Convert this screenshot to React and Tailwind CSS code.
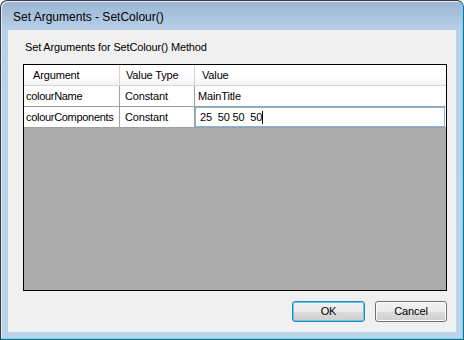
import React from 'react';

const rows = [
    { name: 'colourName', type: 'Constant', value: 'MainTitle' },
    { name: 'colourComponents', type: 'Constant', value: '25  50 50  50', editing: true },
];

const Btn = ({ children, focused }) => (
    <button
        className={
            focused
                ? 'w-[73px] h-[21px] rounded-[3px] border border-[#3c7fb1] shadow-[inset_0_0_0_1px_#48d0f8] bg-[linear-gradient(#f2f2f2_0%,#ebebeb_50%,#dddddd_51%,#cfcfcf_100%)] text-[11px] text-black'
                : 'w-[72px] h-[21px] rounded-[3px] border border-[#707070] shadow-[inset_0_0_0_1px_#fcfcfc] bg-[linear-gradient(#f2f2f2_0%,#ebebeb_50%,#dddddd_51%,#cfcfcf_100%)] text-[11px] text-black'
        }
    >
        {children}
    </button>
);

export default function App() {
    return (
        <div className="w-[464px] h-[340px] bg-white font-['Liberation_Sans',Arial,sans-serif]">
            <div className="w-full h-full flex flex-col rounded-t-[7px] border border-[#3a3a3a] border-r-[#1d6f8c] border-b-[#1d6f8c] bg-[linear-gradient(#9ab5d3_0px,#b9d1ea_30px,#bcd3ec_100%)] px-[7px] pb-[7px] shadow-[inset_-1px_-1px_0_#6fd6f2,inset_1px_1px_0_#e4eefa]">
                {/* Title bar */}
                <div className="h-[29px] flex items-center pl-[5px] pt-[2px] text-[12px] text-black shrink-0">
                    Set Arguments - SetColour()
                </div>

                {/* Client */}
                <div className="flex-1 bg-[#f0f0f0] flex flex-col pt-[11px] pl-[15px] pr-[9px] text-[11px] tracking-[-0.15px] text-black">
                    <div className="h-[13px] leading-[13px] pl-[2px]">Set Arguments for SetColour() Method</div>

                    {/* Grid */}
                    <div className="mt-[10px] h-[227px] border border-[#000] bg-[#ababab] flex flex-col">
                        <div className="h-[21px] flex bg-[linear-gradient(#ffffff_0%,#ffffff_50%,#f3f3f3_100%)] border-b border-[#d5d5d5]">
                            <div className="w-[96px] pl-[9px] flex items-center border-r border-[#d5d5d5]">Argument</div>
                            <div className="w-[75px] pl-[6px] flex items-center border-r border-[#d5d5d5]">Value Type</div>
                            <div className="flex-1 pl-[7px] flex items-center">Value</div>
                        </div>
                        {rows.map((r) => (
                            <div key={r.name} className="h-[21px] flex bg-white border-b border-[#a0a0a0]">
                                <div className="w-[96px] pl-[2px] flex items-center border-r border-[#a0a0a0] whitespace-nowrap overflow-hidden tracking-[-0.3px]">{r.name}</div>
                                <div className="w-[75px] pl-[5px] flex items-center border-r border-[#a0a0a0]">{r.type}</div>
                                {r.editing ? (
                                    <div className="flex-1 pr-[1px] flex">
                                        <div className="flex-1 border border-[#7eb4ea] flex items-center pl-[4px] whitespace-pre">
                                            {r.value}
                                            <span className="inline-block w-px h-[13px] bg-black" />
                                        </div>
                                    </div>
                                ) : (
                                    <div className="flex-1 pl-[3px] flex items-center">{r.value}</div>
                                )}
                            </div>
                        ))}
                    </div>

                    {/* Buttons */}
                    <div className="mt-[10px] flex justify-end gap-[10px]">
                        <Btn focused>OK</Btn>
                        <Btn>Cancel</Btn>
                    </div>
                </div>
            </div>
        </div>
    );
}
